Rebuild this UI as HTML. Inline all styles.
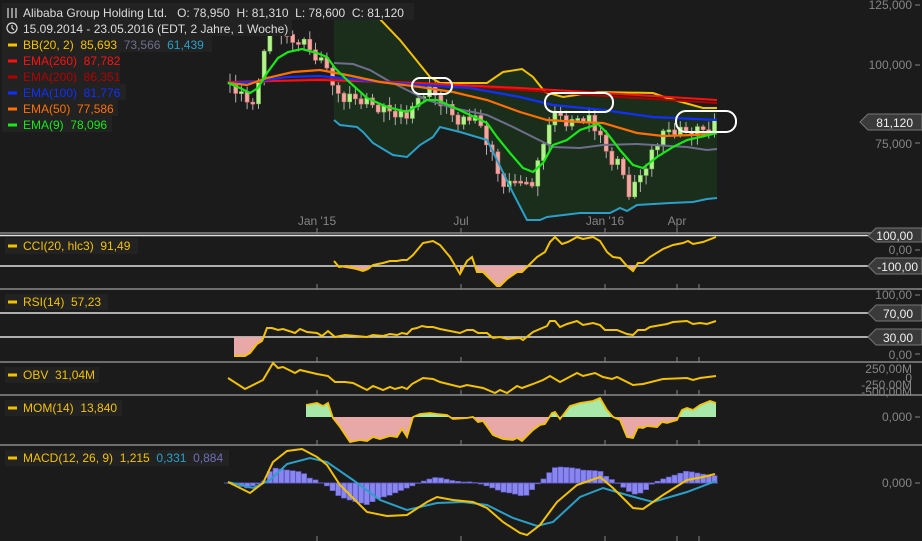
<!DOCTYPE html>
<html><head><meta charset="utf-8">
<style>
html,body{margin:0;padding:0;background:#1c1b1b;}
body{width:922px;height:541px;overflow:hidden;position:relative;font-family:"Liberation Sans",sans-serif;}
svg{position:absolute;left:0;top:0;}
text{font-family:"Liberation Sans",sans-serif;font-size:12px;white-space:pre;}
.ax{fill:#858585;text-anchor:end;}
</style></head><body>
<svg id="s" width="922" height="541" viewBox="0 0 922 541" xml:space="preserve">
<defs>
<clipPath id="above"><rect x="0" y="0" width="922" height="417"/></clipPath>
<clipPath id="below"><rect x="0" y="417" width="922" height="30"/></clipPath>
</defs>
<polygon fill="#1b2e1b" points="334,15 376,15 400,40 430,77 440,83 487,83 503,72 522,69 533,77 545,92 563,97 597,92 653,93 667,98 703,108 717,108 717,198 707,199 693,202 670,203 637,205 627,211 620,208 610,213 580,213 547,217 540,220 527,220 513,193 497,160 487,140 460,132 440,127 433,137 420,145 407,157 393,155 373,143 363,132 357,127 340,125 334,120"/>
<g id="candles"></g>
<polyline fill="none" stroke="#6e6e8c" stroke-width="2" points="334,63 353,64 370,70 387,80 407,90 427,100 453,108 487,115 513,127 533,137 553,147 580,148 603,145 637,144 687,147 707,150 717,149"/>
<polyline fill="none" stroke="#f2c200" stroke-width="2" points="334,15 376,15 400,40 430,77 440,83 487,83 503,72 522,69 533,77 545,92 563,97 597,92 653,93 667,98 703,108 717,108"/>
<polyline fill="none" stroke="#2aa0c8" stroke-width="2" points="334,120 340,125 357,127 363,132 373,143 393,155 407,157 420,145 433,137 440,127 460,132 487,140 497,160 513,193 527,220 540,220 547,217 580,213 610,213 620,208 627,211 637,205 670,203 693,202 707,199 717,198"/>
<polyline fill="none" stroke="#b00000" stroke-width="2" points="228,83 320,79 420,83 520,90 620,97 717,103"/>
<polyline fill="none" stroke="#ff1010" stroke-width="2" points="228,82 320,80 420,83 520,88 620,94 717,100"/>
<polyline fill="none" stroke="#1030ff" stroke-width="2.2" points="228,83 253,82 287,77 320,76 370,81 420,85 470,88 520,97 553,105 603,110 653,117 717,120"/>
<polyline fill="none" stroke="#ff7000" stroke-width="2.2" points="228,83 247,85 267,78 293,72 320,70 347,75 380,82 420,87 453,92 487,100 520,112 547,120 580,122 603,123 637,133 663,136 693,135 717,133"/>
<polyline fill="none" stroke="#18e818" stroke-width="2.2" points="228,83 240,88 250,93 258,88 267,73 278,58 288,52 302,49 317,53 327,57 335,68 347,80 367,98 387,107 407,112 427,100 437,100 453,107 470,115 487,123 497,137 510,153 523,168 533,172 543,163 553,145 567,140 580,130 598,124 607,133 620,150 633,165 643,168 657,157 673,147 687,140 700,137 717,133"/>
<rect x="412" y="78" width="40" height="16" rx="8" fill="none" stroke="#fff" stroke-width="2"/>
<rect x="545" y="93" width="68" height="19" rx="9" fill="none" stroke="#fff" stroke-width="2"/>
<rect x="676" y="111" width="60" height="21" rx="10" fill="none" stroke="#fff" stroke-width="2"/>
<g fill="#858585" text-anchor="middle"><text x="317" y="225">Jan '15</text><text x="461" y="225">Jul</text><text x="605" y="225">Jan '16</text><text x="677" y="225">Apr</text></g>
<g stroke="#858585"><line x1="317" y1="228" x2="317" y2="233"/><line x1="461" y1="228" x2="461" y2="233"/><line x1="605" y1="228" x2="605" y2="233"/><line x1="677" y1="228" x2="677" y2="233"/>
<line x1="317" y1="284" x2="317" y2="289"/><line x1="461" y1="284" x2="461" y2="289"/><line x1="605" y1="284" x2="605" y2="289"/><line x1="677" y1="284" x2="677" y2="289"/><line x1="699" y1="284" x2="699" y2="289"/>
<line x1="317" y1="357" x2="317" y2="362"/><line x1="461" y1="357" x2="461" y2="362"/><line x1="605" y1="357" x2="605" y2="362"/><line x1="677" y1="357" x2="677" y2="362"/><line x1="699" y1="357" x2="699" y2="362"/>
<line x1="317" y1="390" x2="317" y2="395"/><line x1="461" y1="390" x2="461" y2="395"/><line x1="605" y1="390" x2="605" y2="395"/><line x1="677" y1="390" x2="677" y2="395"/><line x1="699" y1="390" x2="699" y2="395"/>
<line x1="317" y1="440" x2="317" y2="445"/><line x1="461" y1="440" x2="461" y2="445"/><line x1="605" y1="440" x2="605" y2="445"/><line x1="677" y1="440" x2="677" y2="445"/><line x1="699" y1="440" x2="699" y2="445"/>
<line x1="317" y1="536" x2="317" y2="541"/><line x1="461" y1="536" x2="461" y2="541"/><line x1="605" y1="536" x2="605" y2="541"/><line x1="677" y1="536" x2="677" y2="541"/><line x1="699" y1="536" x2="699" y2="541"/>
</g>
<g stroke="#8a8a8a" stroke-width="1.5"><line x1="0" y1="233" x2="922" y2="233"/><line x1="0" y1="289" x2="922" y2="289"/><line x1="0" y1="362" x2="922" y2="362"/><line x1="0" y1="395" x2="922" y2="395"/><line x1="0" y1="445" x2="922" y2="445"/></g>
<g stroke="#e0e0e0" stroke-width="1.5"><line x1="0" y1="235.5" x2="870" y2="235.5"/><line x1="0" y1="266" x2="870" y2="266"/><line x1="0" y1="313" x2="870" y2="313"/><line x1="0" y1="337" x2="870" y2="337"/></g>
<polygon fill="#e8a8a8" points="334,266 363,271 368,269 373,266"/>
<polygon fill="#e8a8a8" points="460,266 460,274 463,266"/>
<polygon fill="#e8a8a8" points="475,266 477,272 483,272 497,286 500,286 507,279 517,272 522,272 530,266"/>
<polygon fill="#e8a8a8" points="623,266 627,266 633,271 638,266"/>
<polyline fill="none" stroke="#f2c200" stroke-width="2" points="334,261 339,267 347,266 363,271 368,269 373,265 383,263 390,261 397,261 402,260 407,260 413,255 423,243 433,241 440,245 450,257 460,274 467,261 472,257 477,272 483,272 497,286 500,286 507,279 517,272 522,272 530,264 537,257 545,252 550,242 555,237 562,244 568,242 577,237 583,239 593,237 600,241 607,252 613,257 620,258 627,266 633,271 638,263 643,263 650,257 663,249 673,245 683,243 688,241 693,244 703,242 716,237"/>
<polygon fill="#e8a8a8" points="234,337 234,356 245,356 250,353 257,344 262,341 263,337"/>
<polyline fill="none" stroke="#f2c200" stroke-width="2" points="234,356 245,356 250,353 257,344 262,341 267,328 272,328 278,330 283,329 295,333 300,329 307,332 317,333 322,336 328,331 335,337 345,335 367,337 373,335 383,336 390,334 397,335 402,333 407,334 412,329 417,328 422,326 427,327 433,327 440,329 460,333 467,330 473,330 478,333 487,333 493,338 500,337 507,339 520,338 523,340 533,332 547,326 550,321 555,321 560,327 567,324 577,321 583,325 593,323 600,325 605,330 617,330 627,334 633,335 638,330 645,330 650,327 667,324 673,322 687,321 693,324 700,323 707,324 716,321"/>
<polyline fill="none" stroke="#f2c200" stroke-width="2" points="228,378 245,389 263,380 273,363 278,368 283,367 295,373 300,370 317,374 328,376 335,382 345,382 353,383 367,390 373,386 383,390 390,387 395,389 402,387 407,389 412,384 423,378 433,379 440,382 460,387 467,385 483,388 495,393 500,390 507,393 517,386 522,388 533,384 543,380 550,376 560,382 577,373 583,376 595,373 603,377 612,379 617,377 633,385 643,384 663,379 687,378 693,380 700,378 716,376"/>
<g>
<polygon clip-path="url(#above)" fill="#a8e8a8" id="mA"/>
<polygon clip-path="url(#below)" fill="#e8a8a8" id="mB"/>
<polyline fill="none" stroke="#f2c200" stroke-width="1.8" id="mL"/>
</g>
<line x1="224" y1="483" x2="718" y2="483" stroke="#5a56b0" stroke-width="1"/>
<g id="hist"></g>
<polyline fill="none" stroke="#2aa0c8" stroke-width="2" id="sigL"/>
<polyline fill="none" stroke="#f2c200" stroke-width="2" id="macL"/>
<g class="ax"><text x="912" y="9">125,000</text><text x="912" y="69">100,000</text><text x="912" y="148">75,000</text>
<text x="912" y="254">0,00</text><text x="912" y="299">100,00</text><text x="912" y="359">0,00</text>
<text x="912" y="373">250,00M</text><text x="912" y="382">0</text><text x="912" y="389">-250,00M</text><text x="912" y="396">-500,00M</text>
<text x="912" y="421">0,000</text><text x="912" y="487">0,000</text></g>
<g stroke="#858585"><line x1="915" y1="5" x2="920" y2="5"/><line x1="915" y1="65" x2="920" y2="65"/><line x1="915" y1="143" x2="920" y2="143"/><line x1="915" y1="250" x2="920" y2="250"/><line x1="915" y1="295" x2="920" y2="295"/><line x1="915" y1="354" x2="920" y2="354"/><line x1="915" y1="417" x2="920" y2="417"/><line x1="915" y1="483" x2="920" y2="483"/></g>
<g fill="#3a3a3a" stroke="#777" stroke-width="1">
<polygon points="860,122 868,114 922,114 922,130 868,130"/>
<polygon points="868,236 876,228 922,228 922,242 876,242"/>
<polygon points="868,266 876,258 922,258 922,274 876,274"/>
<polygon points="868,313 876,305 922,305 922,321 876,321"/>
<polygon points="868,337 876,329 922,329 922,345 876,345"/>
</g>
<g fill="#f0f0f0" text-anchor="end"><text x="913" y="127">81,120</text><text x="913" y="240">100,00</text><text x="918" y="271">-100,00</text><text x="913" y="318">70,00</text><text x="913" y="342">30,00</text></g>
<g fill="#222222">
<rect x="2" y="3" width="412" height="17"/><rect x="2" y="20" width="290" height="16"/><rect x="2" y="36" width="210" height="16"/><rect x="2" y="52" width="118" height="16"/><rect x="2" y="68" width="118" height="16"/><rect x="2" y="84" width="124" height="16"/><rect x="2" y="100" width="116" height="16"/><rect x="2" y="116" width="110" height="16"/>
<rect x="5" y="238" width="133" height="16"/><rect x="5" y="294" width="103" height="16"/><rect x="5" y="367" width="94" height="16"/><rect x="5" y="400" width="117" height="16"/><rect x="5" y="450" width="224" height="16"/>
</g>
<g fill="#dcdcdc"><text x="23" y="17">Alibaba Group Holding Ltd.   O: 78,950  H: 81,310  L: 78,600  C: 81,120</text><text x="23" y="33">15.09.2014 - 23.05.2016 (EDT, 2 Jahre, 1 Woche)</text></g>
<g stroke="#dcdcdc" stroke-width="1.2" fill="none"><line x1="8" y1="8" x2="8" y2="18"/><line x1="12" y1="8" x2="12" y2="18"/><line x1="16" y1="8" x2="16" y2="18"/><circle cx="12" cy="28" r="5"/><polyline points="12,25 12,28 14,30"/></g>
<g stroke-width="3"><line x1="8" y1="45" x2="17" y2="45" stroke="#f2c200"/><line x1="8" y1="61" x2="17" y2="61" stroke="#ff1010"/><line x1="8" y1="77" x2="17" y2="77" stroke="#b00000"/><line x1="8" y1="93" x2="17" y2="93" stroke="#1030ff"/><line x1="8" y1="109" x2="17" y2="109" stroke="#ff7000"/><line x1="8" y1="125" x2="17" y2="125" stroke="#18e818"/>
<g stroke="#f2c200"><line x1="8" y1="246" x2="17" y2="246"/><line x1="8" y1="302" x2="17" y2="302"/><line x1="8" y1="375" x2="17" y2="375"/><line x1="8" y1="408" x2="17" y2="408"/><line x1="8" y1="458" x2="17" y2="458"/></g></g>
<text x="23" y="49" fill="#f2c200">BB(20, 2)  85,693  <tspan fill="#6e6e8c">73,566</tspan>  <tspan fill="#2aa0c8">61,439</tspan></text>
<text x="23" y="65" fill="#ff1010">EMA(260)  87,782</text>
<text x="23" y="81" fill="#b00000">EMA(200)  86,351</text>
<text x="23" y="97" fill="#1030ff">EMA(100)  81,776</text>
<text x="23" y="113" fill="#ff7000">EMA(50)  77,586</text>
<text x="23" y="129" fill="#18e818">EMA(9)  78,096</text>
<g fill="#f2c200"><text x="23" y="250">CCI(20, hlc3)  91,49</text><text x="23" y="306">RSI(14)  57,23</text><text x="23" y="379">OBV  31,04M</text><text x="23" y="412">MOM(14)  13,840</text><text x="23" y="462">MACD(12, 26, 9)  1,215  <tspan fill="#2aa0c8">0,331</tspan>  <tspan fill="#6e6eb8">0,884</tspan></text></g>
</svg>
<script>
(function(){
var NS="http://www.w3.org/2000/svg";
function interp(pts,x){for(var i=0;i<pts.length-1;i++){if(x>=pts[i][0]&&x<=pts[i+1][0]){var t=(x-pts[i][0])/(pts[i+1][0]-pts[i][0]||1);return pts[i][1]+t*(pts[i+1][1]-pts[i][1]);}}return x<pts[0][0]?pts[0][1]:pts[pts.length-1][1];}
function el(n,a,p){var e=document.createElementNS(NS,n);for(var k in a)e.setAttribute(k,a[k]);p.appendChild(e);return e;}
var C=[[230,83],[240,95],[250,105],[258,88],[265,45],[270,22],[280,30],[290,45],[300,40],[310,50],[320,60],[330,70],[337,95],[345,100],[360,100],[380,108],[400,112],[410,118],[420,95],[430,90],[440,100],[450,112],[460,120],[470,118],[480,125],[490,150],[500,180],[510,185],[520,175],[530,190],[540,160],[550,118],[560,115],[570,125],[580,115],[590,118],[600,140],[610,160],[620,165],[630,195],[640,175],[650,155],[660,140],[670,130],[680,132],[700,130],[716,122]];
var g=document.getElementById("candles");var prev=83;var i=0;
for(var x=230;x<=716;x+=5.7){i++;var c=interp(C,x)+((i*37)%11-5)*1.2;var o=prev;var hi=Math.min(o,c)-2-(i*13%7);var lo=Math.max(o,c)+2+(i*17%9);var up=c<o;
el("line",{x1:x.toFixed(1),x2:x.toFixed(1),y1:hi,y2:lo,stroke:"#b0b0b0","stroke-width":1},g);
var h=Math.max(Math.abs(c-o),2);el("rect",{x:(x-2).toFixed(1),y:Math.min(o,c),width:4,height:h,fill:up?"#b6f090":"#f0a8a0",stroke:up?"#7ad050":"#e07070","stroke-width":0.6},g);prev=c;}
var M=[[306,405],[317,403],[323,406],[328,403],[333,418],[340,427],[350,442],[360,440],[367,441],[373,437],[380,439],[390,436],[397,437],[402,429],[407,437],[413,417],[420,414],[430,413],[437,414],[447,415],[453,419],[467,418],[473,417],[478,422],[483,421],[493,435],[503,439],[513,440],[517,438],[522,441],[533,430],[540,425],[545,424],[552,413],[555,412],[560,419],[570,406],[580,403],[593,401],[600,398],[607,410],[613,417],[620,420],[627,437],[633,438],[638,427],[643,428],[647,426],[657,427],[662,422],[667,423],[677,420],[682,410],[687,408],[693,410],[700,405],[710,401],[716,403]];
var s=M.map(function(p){return p.join(",")}).join(" ");
var poly="306,417 "+s+" 716,417";
document.getElementById("mA").setAttribute("points",poly);document.getElementById("mB").setAttribute("points",poly);document.getElementById("mL").setAttribute("points",s);
var A=[[228,482],[250,493],[263,483],[273,462],[287,451],[302,449],[317,457],[327,465],[340,485],[367,512],[387,516],[407,515],[427,502],[437,497],[453,500],[473,502],[487,508],[503,522],[520,533],[527,535],[540,525],[557,502],[577,485],[600,477],[613,488],[633,508],[643,509],[663,495],[687,480],[703,477],[715,474]];
var B=[[228,482],[253,488],[270,480],[287,464],[310,458],[327,462],[353,480],[380,500],[407,510],[437,503],[463,502],[487,505],[513,518],[537,526],[553,522],[580,497],[603,488],[627,495],[653,502],[687,492],[716,481]];
var hg=document.getElementById("hist");
for(var x=230;x<=716;x+=5.7){var d=(interp(A,x)-interp(B,x))*1.0;var y=d<0?483+d:483;el("rect",{x:(x-2.6).toFixed(1),y:y.toFixed(1),width:5.2,height:Math.max(Math.abs(d),0.5).toFixed(1),fill:"#8a86f0",stroke:"#5a56c0","stroke-width":0.6},hg);}
document.getElementById("sigL").setAttribute("points",B.map(function(p){return p.join(",")}).join(" "));
document.getElementById("macL").setAttribute("points",A.map(function(p){return p.join(",")}).join(" "));
})();
</script>
</body></html>
